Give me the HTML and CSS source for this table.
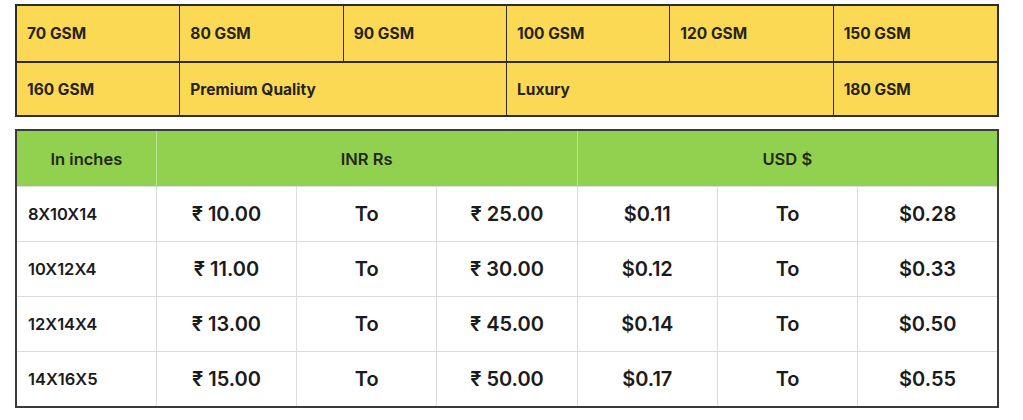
FILE: index.html
```html
<!DOCTYPE html>
<html>
<head>
<meta charset="utf-8">
<link rel="stylesheet" href="styles.css">
</head>
<body>
<div class="page">
  <div class="gsm">
    <div class="cell">70 GSM</div>
    <div class="cell">80 GSM</div>
    <div class="cell">90 GSM</div>
    <div class="cell">100 GSM</div>
    <div class="cell">120 GSM</div>
    <div class="cell last">150 GSM</div>
    <div class="cell bottom">160 GSM</div>
    <div class="cell bottom span2">Premium Quality</div>
    <div class="cell bottom span2">Luxury</div>
    <div class="cell bottom last">180 GSM</div>
  </div>

  <table class="prices">
    <thead>
      <tr>
        <th class="first">In inches</th>
        <th colspan="3">INR Rs</th>
        <th colspan="3">USD $</th>
      </tr>
    </thead>
    <tbody>
      <tr><td class="size">8X10X14</td><td>₹ 10.00</td><td class="to">To</td><td>₹ 25.00</td><td>$0.11</td><td class="to">To</td><td>$0.28</td></tr>
      <tr><td class="size">10X12X4</td><td>₹ 11.00</td><td class="to">To</td><td>₹ 30.00</td><td>$0.12</td><td class="to">To</td><td>$0.33</td></tr>
      <tr><td class="size">12X14X4</td><td>₹ 13.00</td><td class="to">To</td><td>₹ 45.00</td><td>$0.14</td><td class="to">To</td><td>$0.50</td></tr>
      <tr><td class="size">14X16X5</td><td>₹ 15.00</td><td class="to">To</td><td>₹ 50.00</td><td>$0.17</td><td class="to">To</td><td>$0.55</td></tr>
    </tbody>
  </table>
</div>
</body>
</html>
```

FILE: styles.css
```css
html, body {
  margin: 0;
  padding: 0;
  background: #ffffff;
}

body {
  font-family: "Inter", "Noto Sans", "DejaVu Sans", sans-serif;
  color: #1f1f1f;
}

.page {
  padding: 4px 0 0 15px;
  width: 984px;
}

.gsm {
  display: grid;
  grid-template-columns: repeat(6, 1fr);
  grid-template-rows: 55px 55px;
  background: #fbd954;
  border: 2px solid #2e2e28;
  box-sizing: border-box;
  height: 113px;
}

.gsm .cell {
  display: flex;
  align-items: center;
  padding-left: 10px;
  font-size: 15.5px;
  font-weight: 700;
  color: #26241c;
  border-right: 1.5px solid #2e2e28;
}

.gsm .cell.last {
  border-right: none;
}

.gsm .cell.bottom {
  border-top: 2px solid #2e2e28;
}

.gsm .cell.span2 {
  grid-column: span 2;
}

.prices {
  margin-top: 12px;
  width: 984px;
  border-collapse: collapse;
  table-layout: fixed;
  border: 2px solid #3a3a3a;
}

.prices th {
  background: #92d050;
  height: 55px;
  font-size: 16.5px;
  font-weight: 600;
  color: #1e2a12;
  text-align: center;
  border-left: 1px solid #b9e48f;
  padding: 0;
}

.prices th.first {
  border-left: none;
}

.prices td {
  height: 54px;
  text-align: center;
  font-size: 20px;
  font-weight: 600;
  color: #1b1b1b;
  border: 1px solid #dcdcdc;
  padding: 0;
}

.prices td.to {
  font-weight: 600;
}

.prices td.size {
  text-align: left;
  padding-left: 11px;
  font-size: 16.5px;
  font-weight: 600;
}
```
